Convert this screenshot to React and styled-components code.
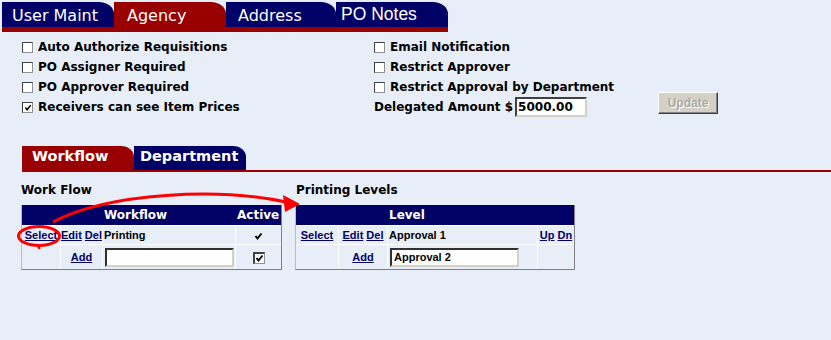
import React from 'react';
import styled, { createGlobalStyle } from 'styled-components';

const NAVY = '#000066';
const RED = '#990000';
const BG = '#e7eef8';

const Global = createGlobalStyle`
  html, body { margin: 0; padding: 0; background: ${BG}; }
  body { font-family: "DejaVu Sans", Verdana, sans-serif; }
`;

const Page = styled.div`
  position: relative;
  width: 831px;
  height: 340px;
  overflow: hidden;
  background: ${BG};
`;

const TopTabs = styled.div`
  display: flex;
  margin: 2px 0 0 2px;
  width: 446px;
  border-bottom: 5px solid ${RED};
`;

const TopTab = styled.div`
  box-sizing: border-box;
  width: ${p => p.$w}px;
  height: 25px;
  padding: ${p => (p.$alt ? 1 : 2)}px 0 0 ${p => p.$pl}px;
  line-height: 23px;
  background: ${p => (p.$active ? RED : NAVY)};
  color: #fff;
  font-family: ${p => (p.$alt ? '"Liberation Sans", Arial, sans-serif' : '"DejaVu Sans", Verdana, sans-serif')};
  font-size: ${p => (p.$alt ? 17.5 : 16)}px;
  border-top-right-radius: 15px 12px;
  white-space: nowrap;
`;

const Options = styled.div`
  display: flex;
  padding: 5px 0 0 22px;
`;

const OptionCol = styled.div`
  display: flex;
  flex-direction: column;
  width: ${p => p.$w}px;
`;

const OptionRow = styled.div`
  display: flex;
  align-items: center;
  gap: 5px;
  height: 20px;
  font: bold 12px "DejaVu Sans", Verdana, sans-serif;
  color: #000;
  white-space: nowrap;
`;

const Box = styled.span`
  box-sizing: border-box;
  width: ${p => p.$size || 11}px;
  height: ${p => p.$size || 11}px;
  flex: none;
  display: inline-flex;
  align-items: center;
  justify-content: center;
  background: #fff;
  border-style: solid;
  border-width: ${p => (p.$thick ? '2px 1px 1px 2px' : '1px')};
  border-color: #404040 #909090 #909090 #404040;
  margin-top: 1px;
  vertical-align: middle;
`;

const AmountRow = styled(OptionRow)`
  gap: 2px;
`;

const AmountInput = styled.input`
  box-sizing: border-box;
  width: 72px;
  height: 20px;
  padding: 0 1px;
  border: 2px solid;
  border-color: #404040 #d4d0c8 #d4d0c8 #404040;
  background: #fff;
  font: bold 12px "DejaVu Sans", Verdana, sans-serif;
  color: #000;
  outline: none;
`;

const UpdateButton = styled.button`
  align-self: flex-end;
  margin-bottom: 3px;
  width: 60px;
  height: 22px;
  padding: 0;
  background: #d4d0c8;
  border: 1px solid;
  border-color: #ffffff #404040 #404040 #ffffff;
  box-shadow: inset -1px -1px 0 #808080;
  font: bold 12px "Liberation Sans", Arial, sans-serif;
  color: #aca899;
  text-shadow: 1px 1px 0 #ffffff;
`;

const SubTabs = styled.div`
  display: flex;
  margin: 29px 0 0 22px;
  border-bottom: 2px solid ${RED};
`;

const SubTab = styled.div`
  box-sizing: border-box;
  width: ${p => p.$w}px;
  height: 24px;
  padding: 2px 0 0 ${p => p.$pl}px;
  line-height: 22px;
  background: ${p => (p.$active ? RED : NAVY)};
  color: #fff;
  font: bold 14.5px "DejaVu Sans", Verdana, sans-serif;
  border-top-right-radius: 13px 11px;
  white-space: nowrap;
`;

const Panels = styled.div`
  display: flex;
  gap: 13px;
  margin: 11px 0 0 21px;
  align-items: flex-start;
`;

const Panel = styled.div`
  display: flex;
  flex-direction: column;
`;

const PanelTitle = styled.div`
  font: bold 12px "DejaVu Sans", Verdana, sans-serif;
  line-height: 14px;
  color: #000;
  margin: 0 0 8px ${p => p.$indent || 0}px;
`;

const Grid = styled.table`
  width: ${p => p.$w}px;
  table-layout: fixed;
  border-collapse: separate;
  border-spacing: 0;
  border: 1px solid;
  border-top: 0;
  border-color: transparent #808080 #808080 #b8bcc4;
  background: ${BG};
`;

const Th = styled.th`
  height: 20px;
  padding: 0 2px;
  background: ${NAVY};
  color: #fff;
  font: bold 12px "DejaVu Sans", Verdana, sans-serif;
  text-align: ${p => p.$align || 'left'};
  white-space: nowrap;
  overflow: hidden;
`;

const Td = styled.td`
  height: ${p => p.$h || 18}px;
  padding: 0 ${p => (p.$tight ? 0 : 1)}px;
  border-top: 1px solid #fff;
  border-left: 1px solid #fff;
  &:first-child { border-left: 0; }
  font: bold 11px "Liberation Sans", Arial, sans-serif;
  color: #000;
  text-align: ${p => p.$align || 'left'};
  white-space: nowrap;
  overflow: ${p => (p.$tight ? 'visible' : 'hidden')};
`;

const Link = styled.a`
  color: ${NAVY};
  text-decoration: underline;
  font-weight: bold;
  cursor: pointer;
`;

const CellInput = styled.input`
  box-sizing: border-box;
  display: block;
  width: 129px;
  height: 19px;
  margin: 0 0 0 1px;
  padding: 0 2px;
  border: 2px solid;
  border-color: #303030 #d4d0c8 #d4d0c8 #303030;
  background: #fff;
  font: bold 11px "Liberation Sans", Arial, sans-serif;
  color: #000;
  outline: none;
`;

const CheckCell = styled.span`
  display: inline-flex;
  vertical-align: middle;
`;

const Overlay = styled.svg`
  position: absolute;
  left: 0;
  top: 0;
  pointer-events: none;
`;

const Check = ({ size = 9, weight = 1.7 }) => (
  <svg width={size} height={size} viewBox="0 0 9 9">
    <path d="M1.5 4 L3.5 6.5 L7.5 1.5" fill="none" stroke="#000" strokeWidth={weight} />
  </svg>
);

const CheckBox = ({ checked, size, thick }) => (
  <Box $size={size} $thick={thick}>{checked && <Check size={(size || 11) - 3} weight={thick ? 2 : 1.7} />}</Box>
);

const Option = ({ label, checked }) => (
  <OptionRow>
    <CheckBox checked={checked} />
    <span>{label}</span>
  </OptionRow>
);

export default function App() {
  return (
    <Page>
      <Global />
      <TopTabs>
        <TopTab $w={112} $pl={10}>User Maint</TopTab>
        <TopTab $w={112} $pl={13} $active>Agency</TopTab>
        <TopTab $w={110} $pl={12}>Address</TopTab>
        <TopTab $w={112} $pl={5} $alt>PO Notes</TopTab>
      </TopTabs>

      <Options>
        <OptionCol $w={352}>
          <Option label="Auto Authorize Requisitions" />
          <Option label="PO Assigner Required" />
          <Option label="PO Approver Required" />
          <Option label="Receivers can see Item Prices" checked />
        </OptionCol>
        <OptionCol $w={284}>
          <Option label="Email Notification" />
          <Option label="Restrict Approver" />
          <Option label="Restrict Approval by Department" />
          <AmountRow>
            <span>Delegated Amount $</span>
            <AmountInput defaultValue="5000.00" />
          </AmountRow>
        </OptionCol>
        <UpdateButton disabled>Update</UpdateButton>
      </Options>

      <SubTabs>
        <SubTab $w={112} $pl={10} $active>Workflow</SubTab>
        <SubTab $w={112} $pl={6}>Department</SubTab>
      </SubTabs>

      <Panels>
        <Panel>
          <PanelTitle>Work Flow</PanelTitle>
          <Grid $w={261}>
            <colgroup>
              <col style={{ width: 38 }} />
              <col style={{ width: 42 }} />
              <col style={{ width: 133 }} />
              <col style={{ width: 46 }} />
            </colgroup>
            <thead>
              <tr>
                <Th colSpan={2} />
                <Th>Workflow</Th>
                <Th $align="left">Active</Th>
              </tr>
            </thead>
            <tbody>
              <tr>
                <Td $align="center" $tight><Link>Select</Link></Td>
                <Td $align="center" $tight><Link>Edit</Link> <Link>Del</Link></Td>
                <Td>Printing</Td>
                <Td $align="center"><CheckCell><Check size={9} weight={2} /></CheckCell></Td>
              </tr>
              <tr>
                <Td $h={24} />
                <Td $h={24} $align="center"><Link>Add</Link></Td>
                <Td $h={24}><CellInput defaultValue="" /></Td>
                <Td $h={24} $align="center"><CheckCell><CheckBox checked size={12} thick /></CheckCell></Td>
              </tr>
            </tbody>
          </Grid>
        </Panel>

        <Panel>
          <PanelTitle $indent={1}>Printing Levels</PanelTitle>
          <Grid $w={280}>
            <colgroup>
              <col style={{ width: 42 }} />
              <col style={{ width: 49 }} />
              <col style={{ width: 150 }} />
              <col style={{ width: 37 }} />
            </colgroup>
            <thead>
              <tr>
                <Th colSpan={2} />
                <Th>Level</Th>
                <Th />
              </tr>
            </thead>
            <tbody>
              <tr>
                <Td $align="center" $tight><Link>Select</Link></Td>
                <Td $align="center" $tight><Link>Edit</Link> <Link>Del</Link></Td>
                <Td>Approval 1</Td>
                <Td $align="center" $tight><Link>Up</Link> <Link>Dn</Link></Td>
              </tr>
              <tr>
                <Td $h={24} />
                <Td $h={24} $align="center"><Link>Add</Link></Td>
                <Td $h={24}><CellInput defaultValue="Approval 2" /></Td>
                <Td $h={24} />
              </tr>
            </tbody>
          </Grid>
        </Panel>
      </Panels>

      <Overlay width="831" height="340" viewBox="0 0 831 340">
        <ellipse cx="39" cy="236" rx="20.5" ry="9.5" fill="none" stroke="#ff0000" strokeWidth="3" />
        <path d="M38 245.5 L39.5 249" stroke="#ff0000" strokeWidth="2.5" fill="none" />
        <path d="M53 222 C 110 192, 220 188, 286 202" fill="none" stroke="#ff0000" strokeWidth="3" />
        <polygon points="283,195 300,204 285,212" fill="#ff0000" />
      </Overlay>
    </Page>
  );
}
